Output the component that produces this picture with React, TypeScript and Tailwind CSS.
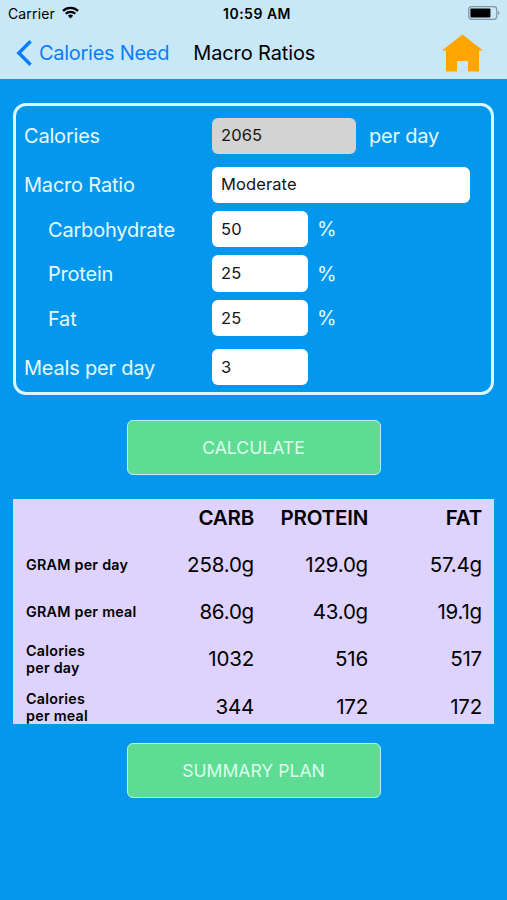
import { useState, ChangeEvent } from 'react'

const fields = [
  { name: 'calories', label: 'Calories', unit: 'per day', row: '', labelClass: '', input: 'w-[144px] bg-[#d3d3d3]' },
  { name: 'ratio', label: 'Macro Ratio', unit: '', row: 'mt-[12.6px]', labelClass: '', input: 'w-[258px] bg-white' },
  { name: 'carb', label: 'Carbohydrate', unit: '%', row: 'mt-2', labelClass: 'pl-6', input: 'w-24 bg-white' },
  { name: 'protein', label: 'Protein', unit: '%', row: 'mt-2', labelClass: 'pl-6', input: 'w-24 bg-white' },
  { name: 'fat', label: 'Fat', unit: '%', row: 'mt-2', labelClass: 'pl-6', input: 'w-24 bg-white' },
  { name: 'meals', label: 'Meals per day', unit: '', row: 'mt-[12.6px]', labelClass: '', input: 'w-24 bg-white' },
]

const rows = [
  { label: ['GRAM per day'], values: ['258.0g', '129.0g', '57.4g'] },
  { label: ['GRAM per meal'], values: ['86.0g', '43.0g', '19.1g'] },
  { label: ['Calories', 'per day'], values: ['1032', '516', '517'] },
  { label: ['Calories', 'per meal'], values: ['344', '172', '172'] },
]

function StatusBar() {
  return (
    <div className="grid h-[27px] grid-cols-3 items-center pl-2 pr-[7px] text-[14px]">
      <div className="flex items-center gap-[7px]">
        <span className="tracking-[0.14px]">Carrier</span>
        <svg className="-mt-0.5" width="17" height="13" viewBox="0 0 17 13" fill="none" stroke="#000" strokeWidth="2.3">
          <path d="M1 4.9a10.6 10.6 0 0 1 15 0" />
          <path d="M3.7 7.8a6.8 6.8 0 0 1 9.6 0" />
          <path d="M8.5 12.4 5.9 9.8a3.7 3.7 0 0 1 5.2 0z" fill="#000" stroke="none" />
        </svg>
      </div>
      <span className="pl-1.5 text-center font-semibold tracking-[0.5px]">10:59 AM</span>
      <svg className="-mt-0.5 justify-self-end" width="32" height="14" viewBox="0 0 32 14">
        <rect x=".7" y=".7" width="28" height="12.6" rx="2.8" fill="none" stroke="#7f959f" strokeWidth="1.2" />
        <rect x="2.4" y="2.4" width="20" height="9.2" rx=".8" fill="#000" />
        <path d="M30.2 4.8c1.6.6 1.6 3.8 0 4.4z" fill="#7f959f" />
      </svg>
    </div>
  )
}

function NavBar() {
  return (
    <div className="flex h-[52px] items-center pl-4 pr-6 text-[20px]">
      <button className="flex items-center gap-[7px] text-[#087dff]">
        <svg width="16" height="26" viewBox="0 0 16 26" fill="none" stroke="currentColor" strokeWidth="3.4">
          <path d="M14.6 1.2 2.8 13l11.8 11.8" />
        </svg>
        <span className="tracking-[-0.28px]">Calories Need</span>
      </button>
      <h1 className="ml-6 tracking-[-0.12px]">Macro Ratios</h1>
      <svg className="ml-auto" width="41" height="38" viewBox="0 0 41 38" fill="#ffa500">
        <path d="M20.5.5 41 16.5h-4V37.5H26V27H15v10.5H4V16.5H0z" />
      </svg>
    </div>
  )
}

export default function App() {
  const [values, setValues] = useState<Record<string, string>>({
    calories: '2065',
    ratio: 'Moderate',
    carb: '50',
    protein: '25',
    fat: '25',
    meals: '3',
  })
  const handleChange = (e: ChangeEvent<HTMLInputElement>) => {
    setValues({ ...values, [e.target.name]: e.target.value })
  }
  return (
    <div className="min-h-screen bg-[#0398ed] font-[Inter,sans-serif] text-black">
      <header className="h-[79px] bg-[#c8e8f8]">
        <StatusBar />
        <NavBar />
      </header>
      <main className="flex flex-col items-center px-[13px] pt-6">
        <section className="h-[292px] w-full rounded-[13px] border-3 border-[#dcf7ff] pl-2 pt-[11.7px]">
          {fields.map((f) => (
            <div key={f.name} className={`flex h-[36.4px] items-center text-[20px] tracking-[-0.2px] text-[#e6faff] ${f.row}`}>
              <label className={`w-[188px] shrink-0 pt-px ${f.labelClass}`}>{f.label}</label>
              <input
                name={f.name}
                value={values[f.name]}
                onChange={handleChange}
                readOnly={f.name === 'calories'}
                className={`h-full rounded-[6px] px-[9px] pb-px text-[16.5px] tracking-[0.1px] text-[#151515] outline-none ${f.input}`}
              />
              <span className={f.unit === '%' ? 'ml-[9px]' : 'ml-[13px]'}>{f.unit}</span>
            </div>
          ))}
        </section>
        <button className="mt-[25px] h-[55px] w-[254px] rounded-[6px] border-[1.5px] border-[#b5f5ee] bg-[#5fdc94] pt-0.5 text-[17.6px] text-[#dcffec]">
          CALCULATE
        </button>
        <table className="mt-6 w-full table-fixed border-collapse bg-[#ded2fe] text-right text-[20.5px] tracking-[-0.2px]">
          <thead>
            <tr className="h-[42px] align-top">
              <th className="w-[127px]" />
              <th className="w-[114px] p-0 pt-1 font-semibold">CARB</th>
              <th className="w-[114px] p-0 pt-1 font-semibold">PROTEIN</th>
              <th className="p-0 pr-3 pt-1 font-semibold">FAT</th>
            </tr>
          </thead>
          <tbody>
            {rows.map((row, i) => (
              <tr key={i} className={i === 3 ? 'h-[41px]' : 'h-[47.3px]'}>
                <th
                  className={`whitespace-nowrap p-0 pl-[13px] text-left text-[14.3px] font-semibold leading-[17px] tracking-[0.25px] ${i === 3 ? 'pt-[7px]' : ''}`}
                >
                  {row.label.map((line) => (
                    <span key={line} className="block">{line}</span>
                  ))}
                </th>
                {row.values.map((v, j) => (
                  <td key={j} className={`p-0 ${j === 2 ? 'pr-3' : ''} ${i === 3 ? 'pt-[7px]' : 'pt-px'}`}>{v}</td>
                ))}
              </tr>
            ))}
          </tbody>
        </table>
        <button className="mt-[19px] h-[55px] w-[254px] rounded-[6px] border-[1.5px] border-[#b5f5ee] bg-[#5fdc94] pt-0.5 text-[17.6px] text-[#dcffec]">
          SUMMARY PLAN
        </button>
      </main>
    </div>
  )
}
